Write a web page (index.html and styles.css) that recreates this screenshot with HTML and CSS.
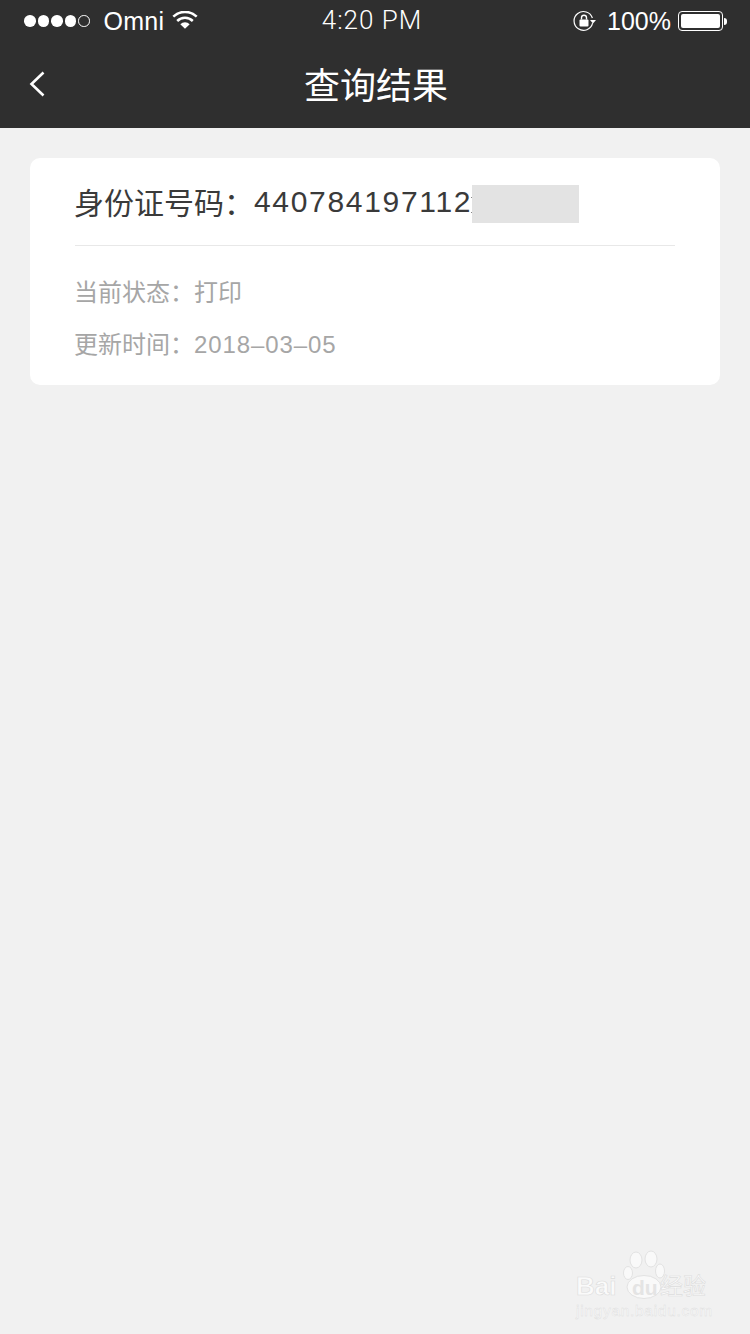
FILE: index.html
```html
<!DOCTYPE html>
<html lang="zh-CN">
<head>
<meta charset="utf-8">
<title>查询结果</title>
<link rel="stylesheet" href="styles.css">
</head>
<body>
<div class="page">
  <header class="header">
    <div class="status">
      <div class="status-left">
        <div class="signal"><i class="dot"></i><i class="dot"></i><i class="dot"></i><i class="dot"></i><i class="dot empty"></i></div>
        <span class="carrier">Omni</span>
        <svg class="wifi" viewBox="0 0 26 18" width="26" height="18"><path d="M13 17.800 8.300 13.200a6.800 6.800 0 0 1 9.400 0Z" fill="#fff"/><path d="M5.200 10a11 11 0 0 1 15.600 0" fill="none" stroke="#fff" stroke-width="2.500"/><path d="M1.300 5.700a16.600 16.600 0 0 1 23.400 0" fill="none" stroke="#fff" stroke-width="2.500"/></svg>
      </div>
      <div class="time">4:20 PM</div>
      <div class="status-right">
        <svg class="lock" viewBox="0 0 24 22" width="24" height="22"><path d="M19.600 13.200A9.400 9.400 0 1 1 19.400 8" fill="none" stroke="#fff" stroke-width="1.200"/><path d="M17 10h6l-3 3.400Z" fill="#fff"/><rect x="6.500" y="9.500" width="9" height="7" rx="1" fill="#fff"/><path d="M8.500 9.500V7.700a2.500 2.500 0 0 1 5 0v1.800" fill="none" stroke="#fff" stroke-width="1.400"/></svg>
        <span class="battery-text">100%</span>
        <div class="battery"><div class="battery-body"><div class="battery-fill"></div></div><div class="battery-tip"></div></div>
      </div>
    </div>
    <nav class="nav">
      <svg class="back" viewBox="0 0 16 26" width="16" height="26"><path d="M14.500 1.500 2.500 13l12 11.500" fill="none" stroke="#fff" stroke-width="2.600"/></svg>
      <h1 class="title">查询结果</h1>
    </nav>
  </header>
  <main class="content">
    <section class="card">
      <div class="id-row">
        <span class="id-label">身份证号码：</span><span class="id-number">440784197112</span><span class="mask"></span>
      </div>
      <div class="info">
        <p class="info-row"><span class="info-label">当前状态：</span>打印</p>
        <p class="info-row"><span class="info-label">更新时间：</span><span class="info-date">2018–03–05</span></p>
      </div>
    </section>
  </main>
  <div class="watermark">
    <div class="wm-top">
      <span class="wm-bai">Bai</span>
      <div class="wm-paw">
        <svg viewBox="0 0 42 50" width="42" height="50"><g fill="#f9f9f9" stroke="#e2e2e2"><ellipse cx="13" cy="10" rx="6" ry="8"/><ellipse cx="28" cy="9" rx="6" ry="8"/><ellipse cx="37" cy="21" rx="4.500" ry="7"/><ellipse cx="5" cy="23" rx="4.500" ry="6.500"/><ellipse cx="21" cy="37" rx="17" ry="11.500"/></g></svg>
        <span class="wm-du">du</span>
      </div>
      <span class="wm-cn">经验</span>
    </div>
    <div class="wm-url">jingyan.baidu.com</div>
  </div>
</div>
</body>
</html>
```

FILE: styles.css
```css
* { box-sizing: border-box; }
html, body { margin: 0; padding: 0; }
body {
  font-family: "Liberation Sans", "Noto Sans CJK SC", sans-serif;
  background: #f1f1f1;
}
.page {
  position: relative;
  width: 750px;
  height: 1334px;
  overflow: hidden;
  background: #f1f1f1;
}
.header { background: #2f2f2f; color: #fff; height: 128px; }
.status {
  display: grid;
  grid-template-columns: 1fr auto 1fr;
  align-items: center;
  height: 40px;
  padding: 2px 23px 0 24px;
}
.status-left { display: flex; align-items: center; }
.signal { display: flex; gap: 2px; margin-right: 14px; }
.dot { width: 11.500px; height: 11.500px; border-radius: 50%; background: #fff; display: block; }
.dot.empty { background: none; border: 1px solid #fff; }
.carrier { font-size: 25px; letter-spacing: 0.300px; margin-right: 8px; }
.wifi { margin-top: -3px; }
.time { font-family: Roboto, sans-serif; font-weight: 300; font-size: 26px; letter-spacing: 1px; margin-top: -3px; margin-right: 7px; }
.status-right { display: flex; align-items: center; justify-content: flex-end; }
.lock { margin-right: 10px; }
.battery-text { font-size: 25px; margin-right: 7px; }
.battery { display: flex; align-items: center; }
.battery-body { width: 45px; height: 20px; border: 1px solid #fff; border-radius: 4px; padding: 2px; }
.battery-fill { height: 100%; background: #fff; border-radius: 2px; }
.battery-tip { width: 3px; height: 7px; background: #fff; border-radius: 0 3px 3px 0; margin-left: 1px; }
.nav {
  position: relative;
  display: flex;
  align-items: center;
  justify-content: center;
  height: 88px;
  padding: 6px 0 0 2px;
}
.back { position: absolute; left: 29px; top: 31px; }
.title { margin: 0; font-size: 36px; font-weight: 400; line-height: 1; color: #fff; }
.content { padding: 30px; }
.card { background: #fff; border-radius: 10px; height: 227px; padding: 0 45px; }
.id-row {
  display: flex;
  align-items: center;
  height: 88px;
  border-bottom: 1px solid #e8e8e8;
  color: #3a3a3a;
  font-size: 30px;
  white-space: nowrap;
}
.id-label { margin-left: -1px; margin-top: -2px; }
.id-number { letter-spacing: 1.680px; }
.mask { position: relative; width: 107px; height: 38px; background: #e3e3e3; margin-top: 5px; }
.mask::before {
  content: "";
  position: absolute;
  left: -1px;
  top: 12px;
  width: 1px;
  height: 1px;
  background: #888;
  box-shadow: 0 15px 0 #888;
}
.info { padding-top: 21px; }
.info-row { margin: 0; height: 52px; line-height: 52px; font-size: 24px; color: #a6a6a6; display: flex; white-space: nowrap; }
.info-label { margin-left: -1px; }
.info-date { letter-spacing: 0.900px; }
.watermark {
  position: absolute;
  left: 576px;
  top: 1252px;
  width: 140px;
  color: #fafafa;
}
.wm-top { display: flex; align-items: flex-end; height: 48px; }
.wm-bai {
  font-size: 26px;
  font-weight: 700;
  line-height: 28px;
  width: 50px;
  color: #fafafa;
  -webkit-text-stroke: 0.600px #dcdcdc;
}
.wm-paw { position: relative; width: 36px; height: 48px; margin-left: -1px; }
.wm-paw svg { position: absolute; left: -2px; bottom: 0; }
.wm-du { position: absolute; left: 7px; bottom: 1px; font-size: 21px; font-weight: 700; line-height: 22px; color: #e4e4e4; }
.wm-cn { font-size: 23px; line-height: 28px; margin-left: -1px; color: #fafafa; -webkit-text-stroke: 0.600px #dcdcdc; white-space: nowrap; }
.wm-url { font-size: 15.500px; line-height: 18px; letter-spacing: 0.700px; margin-top: 2px; color: #fafafa; -webkit-text-stroke: 0.400px #dcdcdc; white-space: nowrap; }
```
